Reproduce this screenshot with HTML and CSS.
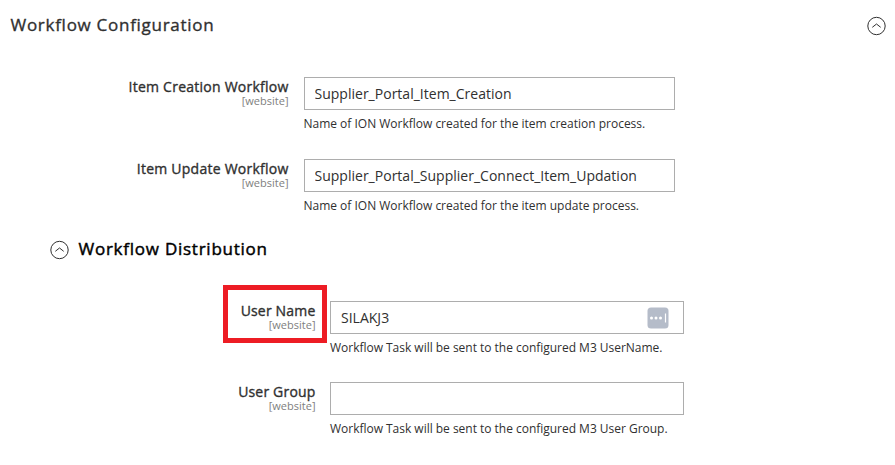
FILE: index.html
```html
<!DOCTYPE html>
<html lang="en">
<head>
<meta charset="utf-8">
<title>Workflow Configuration</title>
<link rel="stylesheet" href="styles.css">
</head>
<body>
<main class="section">
  <header class="section-head">
    <h2>Workflow Configuration</h2>
    <svg class="toggle" viewBox="0 0 20 20"><circle cx="9.500" cy="10" r="8.700"/><path d="M5.300 11.300 9.500 8l4.200 3.300"/></svg>
  </header>
  <div class="field">
    <label for="creation">Item Creation Workflow<small>[website]</small></label>
    <div class="control"><input id="creation" value="Supplier_Portal_Item_Creation"><p>Name of ION Workflow created for the item creation process.</p></div>
  </div>
  <div class="field">
    <label for="update">Item Update Workflow<small>[website]</small></label>
    <div class="control"><input id="update" value="Supplier_Portal_Supplier_Connect_Item_Updation"><p>Name of ION Workflow created for the item update process.</p></div>
  </div>
  <header class="sub-head">
    <svg class="toggle" viewBox="0 0 20 20"><circle cx="9.500" cy="10" r="8.700"/><path d="M5.300 11.300 9.500 8l4.200 3.300"/></svg>
    <h3>Workflow Distribution</h3>
  </header>
  <div class="field nested">
    <label for="user" class="marked">User Name<small>[website]</small></label>
    <div class="control"><input id="user" value="SILAKJ3"><svg class="filler" viewBox="0 0 22 22"><rect x=".5" y=".5" width="21" height="21" rx="3.500"/><circle cx="4.500" cy="11" r="1.500"/><circle cx="9" cy="11" r="1.500"/><circle cx="13.500" cy="11" r="1.500"/><path d="M18.500 6.500v9"/></svg><p>Workflow Task will be sent to the configured M3 UserName.</p></div>
  </div>
  <div class="field nested">
    <label for="group">User Group<small>[website]</small></label>
    <div class="control"><input id="group" value=""><p>Workflow Task will be sent to the configured M3 User Group.</p></div>
  </div>
</main>
</body>
</html>
```
FILE: styles.css
```css
* { box-sizing: border-box; }
body { margin: 0; background: #fff; color: #303030; font-family: "Open Sans", sans-serif; font-size: 14px; overflow: hidden; }
h2, h3 { margin: 0; font-size: 17px; line-height: 24px; font-weight: 400; letter-spacing: .72px; -webkit-text-stroke: .35px currentColor; }
.section { padding: 13px 8.5px 0 10.5px; }
.section-head { display: flex; justify-content: space-between; height: 64px; }
.toggle { display: block; width: 20px; height: 20px; margin-top: 3px; fill: none; stroke: #303030; stroke-width: 1; }
.field { display: flex; height: 82px; }
label { width: 278px; padding-top: 1px; text-align: right; font-weight: 400; line-height: 17px; letter-spacing: .24px; -webkit-text-stroke: .35px currentColor; }
small { display: block; font-size: 11px; line-height: 11px; letter-spacing: 0; color: #808080; -webkit-text-stroke: 0; }
.control { position: relative; width: 371px; margin-left: 15.5px; }
input { display: block; width: 100%; height: 33px; margin: 0; padding: 0 10px 0 9.5px; border: 1px solid #adadad; border-radius: 0; color: #303030; background: #fff; font: inherit; letter-spacing: .01px; }
p { margin: 5px 0 0 -.5px; font-size: 12px; line-height: 17px; letter-spacing: -.01px; white-space: nowrap; }
.sub-head { display: flex; height: 64px; margin: -4px 0 0 39px; gap: 9px; }
.sub-head h3 { color: #000; -webkit-text-stroke-width: .45px; letter-spacing: .75px; }
.nested { height: 81px; }
.nested label { width: 305px; letter-spacing: .18px; }
.nested small { letter-spacing: 0; }
.nested .control { width: 354px; margin-left: 14.5px; }
.nested input { padding-left: 10px; }
.nested p { margin-left: 0; letter-spacing: -.02px; }
.marked { position: relative; }
.marked::after { content: ""; box-sizing: border-box; position: absolute; right: -11.5px; top: -16px; width: 104px; height: 58px; border: 5px solid #ed1c24; }
.filler { position: absolute; left: 317px; top: 6px; width: 22px; height: 22px; fill: #b5bcc9; }
.filler circle { fill: #fff; }
.filler path { stroke: #fff; stroke-width: 1.2; }
```
